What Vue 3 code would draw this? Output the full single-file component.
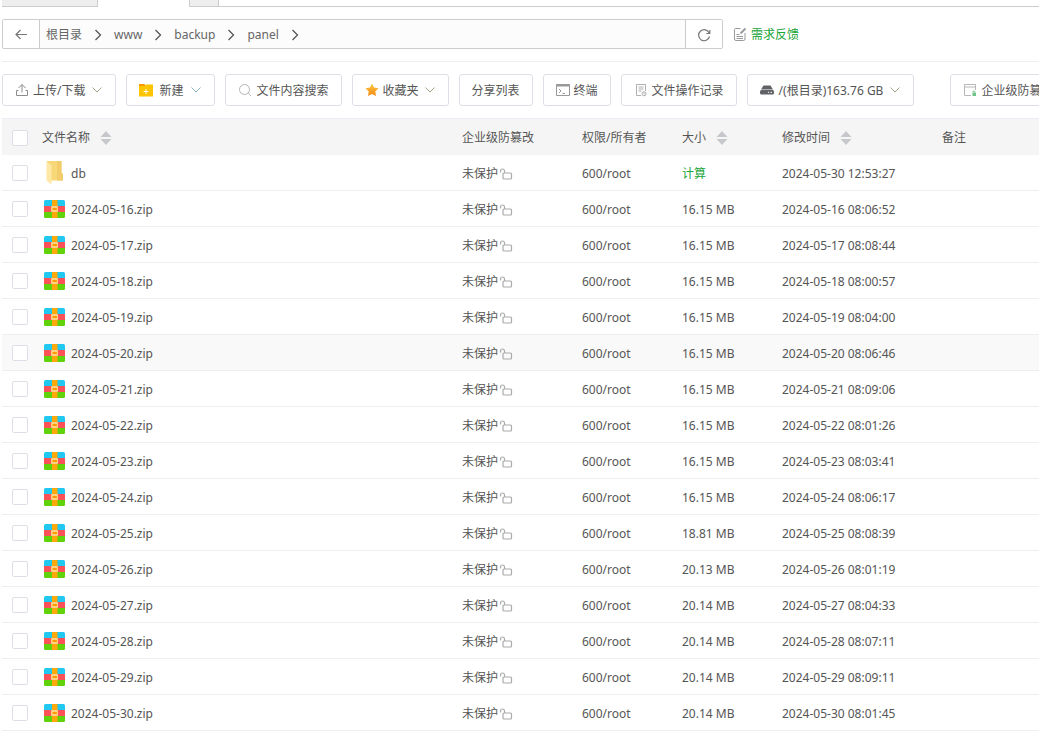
<script setup>
import { ref } from 'vue'

const crumbs = ['根目录', 'www', 'backup', 'panel']

const archives = [
  ['05-16', '16.15 MB', '08:06:52'],
  ['05-17', '16.15 MB', '08:08:44'],
  ['05-18', '16.15 MB', '08:00:57'],
  ['05-19', '16.15 MB', '08:04:00'],
  ['05-20', '16.15 MB', '08:06:46'],
  ['05-21', '16.15 MB', '08:09:06'],
  ['05-22', '16.15 MB', '08:01:26'],
  ['05-23', '16.15 MB', '08:03:41'],
  ['05-24', '16.15 MB', '08:06:17'],
  ['05-25', '18.81 MB', '08:08:39'],
  ['05-26', '20.13 MB', '08:01:19'],
  ['05-27', '20.14 MB', '08:04:33'],
  ['05-28', '20.14 MB', '08:07:11'],
  ['05-29', '20.14 MB', '08:09:11'],
  ['05-30', '20.14 MB', '08:01:45'],
]

const files = ref([
  { name: 'db', folder: true, size: '', time: '2024-05-30 12:53:27', checked: false },
  ...archives.map(([day, size, clock]) => ({
    name: `2024-${day}.zip`,
    folder: false,
    size,
    time: `2024-${day} ${clock}`,
    checked: false,
  })),
])

const active = ref('2024-05-20.zip')
const all = ref(false)

function toggleAll() {
  files.value.forEach((f) => (f.checked = all.value))
}

const tools = [
  { id: 'upload', label: '上传/下载', menu: true },
  { id: 'create', label: '新建', menu: true, tone: 'blue' },
  { id: 'search', label: '文件内容搜索' },
  { id: 'star', label: '收藏夹', menu: true },
  { id: 'share', label: '分享列表' },
  { id: 'terminal', label: '终端' },
  { id: 'log', label: '文件操作记录' },
  { id: 'disk', label: '/(根目录)163.76 GB', menu: true },
  { id: 'guard', label: '企业级防篡改', apart: true },
]

const columns = [
  { label: '文件名称', sort: true },
  { label: '企业级防篡改' },
  { label: '权限/所有者' },
  { label: '大小', sort: true },
  { label: '修改时间', sort: true },
  { label: '备注' },
]
</script>

<template>
  <main class="page">
    <div class="tabs">
      <span class="tab first"></span>
      <span class="tab current"></span>
      <span class="tab add"></span>
      <span class="tab-line"></span>
    </div>

    <div class="address-row">
      <div class="address">
        <button class="nav back" aria-label="返回">
          <svg width="14" height="14" viewBox="0 0 14 14" fill="none" stroke="#777" stroke-width="1.2">
            <path d="M13 7.500H2M6.500 3L2 7.500 6.500 12" />
          </svg>
        </button>
        <nav class="path">
          <template v-for="c in crumbs" :key="c">
            <a href="#">{{ c }}</a>
            <svg class="sep" width="8" height="12" viewBox="0 0 8 12" fill="none" stroke="#555" stroke-width="1.3">
              <path d="M1.500 1L6.500 6l-5 5" />
            </svg>
          </template>
        </nav>
        <button class="nav refresh" aria-label="刷新">
          <svg width="14" height="14" viewBox="0 0 14 14" fill="none" stroke="#777" stroke-width="1.2">
            <path d="M12.200 5A5.500 5.500 0 1 0 12.500 8.500M12.800 2v3.500H9.200" />
          </svg>
        </button>
      </div>
      <a class="feedback" href="#">
        <svg width="14" height="15" viewBox="0 0 14 15" fill="none" stroke="#999">
          <path d="M7.500 1.500H2.500a1 1 0 0 0-1 1v9.500a1.500 1.500 0 0 0 1.500 1.500h7.500a1.500 1.500 0 0 0 1.500-1.500V6" />
          <path d="M3.500 7.500h3M3.500 9.500h6.500M3.500 11.500h6.500" />
          <path d="M7.500 6.500L12.500 1.500" stroke-width="1.800" />
        </svg>
        <span>需求反馈</span>
      </a>
    </div>

    <div class="toolbar">
      <template v-for="t in tools" :key="t.id">
        <span v-if="t.apart" class="divider"></span>
        <button class="tool" :class="t.id">
          <svg v-if="t.id === 'upload'" width="14" height="14" viewBox="0 0 14 14" fill="none" stroke="#8c8c8c">
            <path d="M7 9.500V1.500M3.500 5L7 1.500 10.500 5M3.500 7.500h-2v5h11v-5h-2" />
          </svg>
          <svg v-else-if="t.id === 'create'" width="14" height="14" viewBox="0 0 14 14">
            <path d="M0 1h5.500l1 2H0z" fill="#ff9800" />
            <path d="M0 3h6.500V1.500H14V13.500H0z" fill="#fdc400" />
            <path d="M4.500 8.500h5M7 6v5" stroke="#fff" stroke-width="1" />
          </svg>
          <svg v-else-if="t.id === 'search'" width="14" height="14" viewBox="0 0 14 14" fill="none" stroke="#b5b5b5">
            <circle cx="6.500" cy="6.500" r="5" />
            <path d="M10.200 10.200L13 13" />
          </svg>
          <svg v-else-if="t.id === 'star'" width="14" height="14" viewBox="0 0 14 14">
            <defs>
              <linearGradient id="gold" x1="0" y1="0" x2="0" y2="1">
                <stop offset="0" stop-color="#ffc844" />
                <stop offset="1" stop-color="#f28a10" />
              </linearGradient>
            </defs>
            <path d="M7 .5l2 4.100 4.500.700-3.200 3.200.700 4.500-4-2.100L3 13l.700-4.500L.500 5.300 5 4.600z" fill="url(#gold)" />
          </svg>
          <svg v-else-if="t.id === 'terminal'" width="14" height="14" viewBox="0 0 14 14" fill="none" stroke="#999">
            <path d="M.500 1.500h13v11H.500zM3 6l2 2-2 2M6.500 10.500H9" />
            <path d="M0 2.500h14" stroke-width="2" />
          </svg>
          <svg v-else-if="t.id === 'log'" width="14" height="14" viewBox="0 0 14 14" fill="none" stroke="#b0b0b0">
            <path d="M7 12.500H2.500v-11h9V8M4.500 4h5M4.500 6h5M4.500 8h3" />
            <circle cx="10" cy="10.800" r="2" />
            <path d="M10 9.500v1.500h1" stroke-width=".7" />
          </svg>
          <svg v-else-if="t.id === 'disk'" width="14" height="14" viewBox="0 0 14 14">
            <path d="M3.500 2.500h7L13 6.500H1z" fill="#606266" />
            <rect x="0" y="7" width="14" height="4.500" rx="1.500" fill="#606266" />
            <path d="M8 9.300h1.200M10.500 9.300h1.500" stroke="#fff" />
          </svg>
          <svg v-else-if="t.id === 'guard'" width="14" height="14" viewBox="0 0 14 14" fill="none">
            <path d="M8 12.500H1.500v-11h11V7M1.500 4h11" stroke="#b8b8b8" />
            <path d="M10 10V9a1 1 0 0 1 2 0v1" stroke="#6cc486" />
            <rect x="9.500" y="10" width="3.500" height="3" fill="#6cc486" />
          </svg>
          <span>{{ t.label }}</span>
          <svg v-if="t.menu" class="caret" :class="t.tone" width="12" height="8" viewBox="0 0 12 8" fill="none">
            <path d="M1.500 1.500L6 6l4.500-4.500" />
          </svg>
        </button>
      </template>
    </div>

    <table class="files">
      <colgroup>
        <col class="c-check" />
        <col class="c-name" />
        <col class="c-guard" />
        <col class="c-size" />
        <col class="c-size" />
        <col class="c-time" />
        <col />
      </colgroup>
      <thead>
        <tr>
          <th class="pick"><input v-model="all" type="checkbox" aria-label="全选" @change="toggleAll" /></th>
          <th v-for="c in columns" :key="c.label">
            <span class="cell">
              {{ c.label }}
              <svg v-if="c.sort" class="sort" width="12" height="14" viewBox="0 0 12 14" fill="#c6c8cc">
                <path d="M6 0l5.500 6H.500zM6 14l5.500-6H.500z" />
              </svg>
            </span>
          </th>
        </tr>
      </thead>
      <tbody>
        <tr v-for="f in files" :key="f.name" :class="{ active: f.name === active }">
          <td class="pick"><input v-model="f.checked" type="checkbox" :aria-label="f.name" /></td>
          <td>
            <span class="cell name">
              <svg v-if="f.folder" width="22" height="24" viewBox="0 0 22 24">
                <path d="M3 0h14.500v12l1.500 1v6.500H3z" fill="#f8d778" />
                <path d="M13 0h4.500v12l1.500 1v6.500h-6z" fill="#f3cd6c" />
                <path d="M2.500 .5l5 3.500v19.500l-5-4z" fill="#ffe8a6" />
              </svg>
              <svg v-else width="22" height="18" viewBox="0 0 22 18">
                <path d="M0 6V1.500Q0 0 1.500 0h18Q21 0 21 1.500V6z" fill="#21c8f2" />
                <path d="M0 6h21v6H0z" fill="#ff5157" />
                <path d="M0 12h21v4.500q0 1.500-1.500 1.500h-18Q0 18 0 16.500z" fill="#5fd20a" />
                <path d="M8 0h5.500v18H8z" fill="#ffa80a" />
                <rect x="7" y="6" width="7" height="6" rx="1" fill="#ffd283" />
                <rect x="8.500" y="8" width="4.500" height="2" rx=".5" fill="#ff9d00" />
              </svg>
              <span>{{ f.name }}</span>
            </span>
          </td>
          <td>
            <span class="cell">
              未保护
              <svg class="lock" width="14" height="12" viewBox="0 0 14 12" fill="none" stroke="#aaa" stroke-width="1.200">
                <rect x="4" y="5" width="8.500" height="6" rx="1" />
                <path d="M5.500 5V3A2 2 0 0 0 1.500 3v1.500" />
              </svg>
            </span>
          </td>
          <td>600/root</td>
          <td>
            <a v-if="f.folder" href="#" class="calc">计算</a>
            <template v-else>{{ f.size }}</template>
          </td>
          <td>{{ f.time }}</td>
          <td></td>
        </tr>
      </tbody>
    </table>
  </main>
</template>

<style>
body {
  margin: 0;
  background: #fff;
}
</style>

<style scoped>
.page {
  padding-left: 2px;
  overflow: hidden;
  color: #555;
  font-family: "Noto Sans", "Noto Sans CJK SC", sans-serif;
  font-size: 12px;
  line-height: 18px;
}
.page * {
  box-sizing: border-box;
}
svg {
  flex: none;
  display: block;
}
button {
  font: inherit;
  color: inherit;
  cursor: pointer;
}
a {
  color: inherit;
  text-decoration: none;
}
.tabs {
  display: flex;
  height: 7px;
}
.tab {
  background: #eee;
  border: solid #ccc;
  border-width: 0 1px 1px 0;
}
.first {
  width: 96px;
}
.current {
  width: 91px;
  background: #fff;
  border-width: 0;
}
.add {
  width: 30px;
  border-left-width: 1px;
}
.tab-line {
  flex: 1;
  border-bottom: 1px solid #ccc;
}
.address-row {
  display: flex;
  align-items: center;
  padding: 12px 0;
  border-bottom: 1px solid #eee;
}
.address {
  flex: 0 1 721px;
  display: flex;
  height: 30px;
  border: 1px solid #ccc;
  border-radius: 2px;
}
.nav {
  width: 37px;
  padding: 0;
  display: flex;
  align-items: center;
  justify-content: center;
  border: 0;
  background: #fff;
}
.back {
  border-right: 1px solid #ccc;
}
.refresh {
  border-left: 1px solid #ccc;
  padding-top: 2px;
}
.path {
  flex: 1;
  display: flex;
  align-items: center;
  padding: 2px 0 0 6px;
  background: #fcfcfc;
  color: #666;
}
.sep {
  margin: 0 12px;
}
.feedback {
  display: flex;
  align-items: center;
  gap: 4px;
  margin-left: 10px;
  color: #20a53a;
}
.feedback span {
  padding-top: 2px;
}
.toolbar {
  display: flex;
  gap: 10px;
  padding: 12px 0;
  border-bottom: 1px solid #ebeef5;
}
.tool {
  flex: none;
  display: flex;
  align-items: center;
  gap: 4px;
  height: 32px;
  padding: 0 12px;
  border: 1px solid #dcdfe6;
  border-radius: 3px;
  background: #fff;
  color: #555;
  white-space: nowrap;
}
.tool span {
  padding-top: 2px;
}
.create {
  gap: 6px;
}
.disk {
  gap: 5px;
}
.caret {
  margin-left: 1px;
  stroke: #a3a98a;
}
.upload .caret {
  margin-left: 2px;
}
.caret.blue {
  stroke: #8ab4c2;
}
.divider {
  width: 1px;
  height: 12px;
  margin: 0 8px;
  align-self: center;
  background: #dcdfe6;
}
.files {
  width: 100%;
  table-layout: fixed;
  border-collapse: separate;
  border-spacing: 0;
}
.c-check {
  width: 30px;
}
.c-name {
  width: 420px;
}
.c-guard {
  width: 120px;
}
.c-size {
  width: 100px;
}
.c-time {
  width: 160px;
}
th,
td {
  height: 36px;
  padding: 2px 0 0 10px;
  text-align: left;
  vertical-align: middle;
  font-weight: 400;
  white-space: nowrap;
}
th {
  background: #f5f5f5;
}
td {
  border-bottom: 1px solid #eee;
}
.pick {
  padding-top: 0;
}
th.pick {
  padding-top: 2px;
}
.active td {
  background: #f9f9f9;
}
.cell {
  display: flex;
  align-items: center;
}
.sort {
  margin-left: 10px;
}
.lock {
  margin-left: 1px;
}
.name {
  height: 24px;
  padding-left: 2px;
  gap: 5px;
}
.name svg {
  margin-bottom: 2px;
}
.calc {
  color: #20a53a;
}
input {
  appearance: none;
  display: block;
  width: 16px;
  height: 16px;
  margin: 0;
  border: 1px solid #dcdfe6;
  border-radius: 2px;
  background: #fff;
}
input:checked {
  border-color: #20a53a;
  background: #20a53a;
}
</style>
